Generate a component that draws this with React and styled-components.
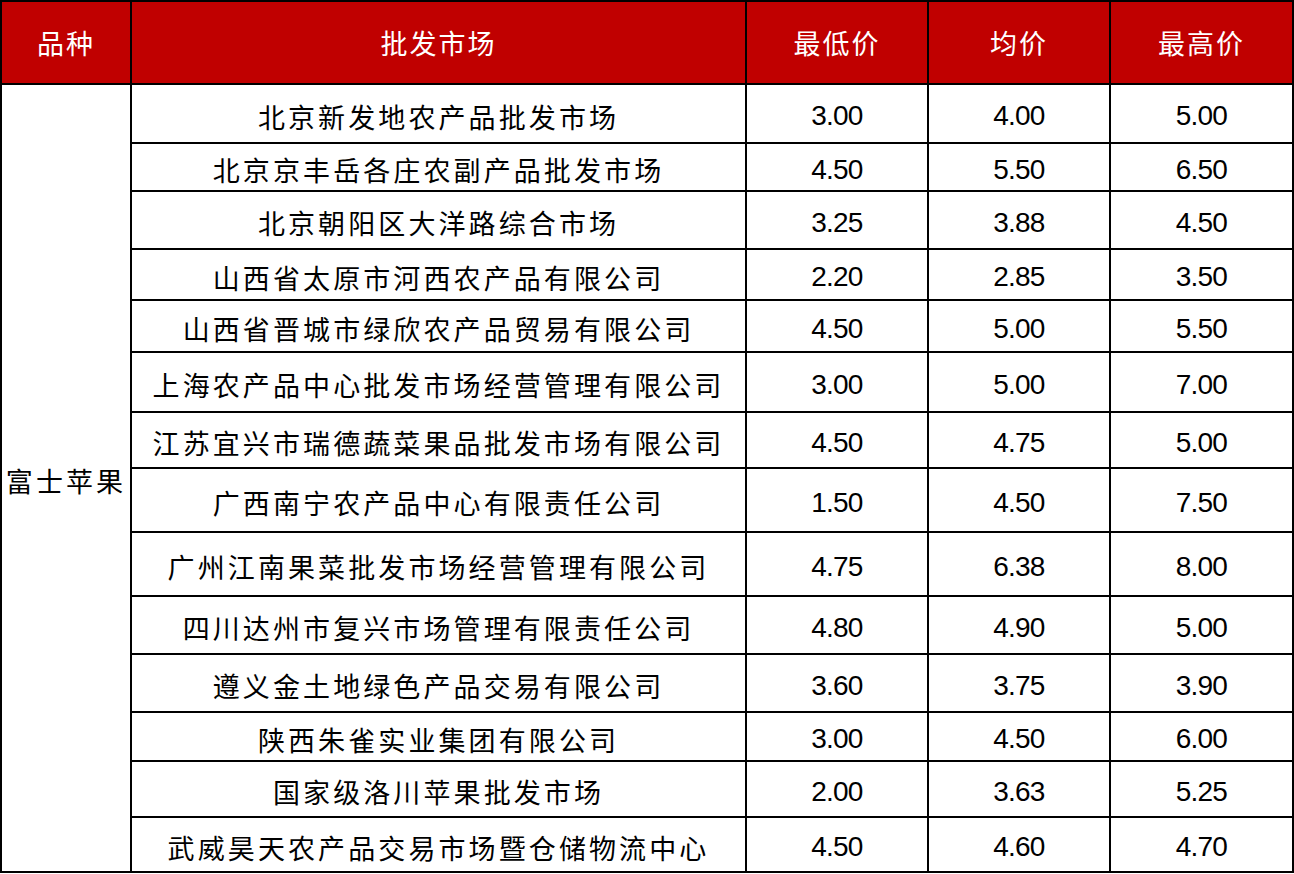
import React from 'react';
import styled, { createGlobalStyle } from 'styled-components';

const GlobalStyle = createGlobalStyle`
  html, body {
    margin: 0;
    padding: 0;
    background: #ffffff;
  }
  body {
    font-family: "Noto Sans CJK SC", "Liberation Sans", sans-serif;
  }
`;

const Table = styled.table`
  width: 1292px;
  border-collapse: collapse;
  table-layout: fixed;
  border: 2px solid #000;
`;

const Th = styled.th`
  height: 81px;
  padding: 0;
  background: #c00000;
  color: #fff;
  font-weight: 400;
  font-size: 27px;
  letter-spacing: 2px;
  text-align: center;
  vertical-align: middle;
  border: 2px solid #000;
`;

const Td = styled.td`
  height: ${(p) => p.$h}px;
  padding: 5px 0 0;
  box-sizing: border-box;
  border: 2px solid #000;
  text-align: center;
  vertical-align: middle;
  color: #000;
  font-size: 27px;
  letter-spacing: 3.1px;
  white-space: nowrap;
`;

const Kind = styled(Td)`
  padding-top: 4px;
`;

const Num = styled(Td)`
  font-family: "Liberation Sans", Arial, sans-serif;
  font-size: 28px;
  letter-spacing: -0.8px;
`;

const rows = [
  { name: '北京新发地农产品批发市场', low: '3.00', avg: '4.00', high: '5.00', h: 59 },
  { name: '北京京丰岳各庄农副产品批发市场', low: '4.50', avg: '5.50', high: '6.50', h: 48 },
  { name: '北京朝阳区大洋路综合市场', low: '3.25', avg: '3.88', high: '4.50', h: 58 },
  { name: '山西省太原市河西农产品有限公司', low: '2.20', avg: '2.85', high: '3.50', h: 51 },
  { name: '山西省晋城市绿欣农产品贸易有限公司', low: '4.50', avg: '5.00', high: '5.50', h: 52 },
  { name: '上海农产品中心批发市场经营管理有限公司', low: '3.00', avg: '5.00', high: '7.00', h: 60 },
  { name: '江苏宜兴市瑞德蔬菜果品批发市场有限公司', low: '4.50', avg: '4.75', high: '5.00', h: 56 },
  { name: '广西南宁农产品中心有限责任公司', low: '1.50', avg: '4.50', high: '7.50', h: 64 },
  { name: '广州江南果菜批发市场经营管理有限公司', low: '4.75', avg: '6.38', high: '8.00', h: 64 },
  { name: '四川达州市复兴市场管理有限责任公司', low: '4.80', avg: '4.90', high: '5.00', h: 58 },
  { name: '遵义金土地绿色产品交易有限公司', low: '3.60', avg: '3.75', high: '3.90', h: 58 },
  { name: '陕西朱雀实业集团有限公司', low: '3.00', avg: '4.50', high: '6.00', h: 49 },
  { name: '国家级洛川苹果批发市场', low: '2.00', avg: '3.63', high: '5.25', h: 56 },
  { name: '武威昊天农产品交易市场暨仓储物流中心', low: '4.50', avg: '4.60', high: '4.70', h: 55 },
];

const App = () => {
  return (
    <>
      <GlobalStyle />
      <Table>
        <colgroup>
          <col style={{ width: 130 }} />
          <col style={{ width: 615 }} />
          <col style={{ width: 182 }} />
          <col style={{ width: 182 }} />
          <col style={{ width: 183 }} />
        </colgroup>
        <thead>
          <tr>
            <Th>品种</Th>
            <Th>批发市场</Th>
            <Th>最低价</Th>
            <Th>均价</Th>
            <Th>最高价</Th>
          </tr>
        </thead>
        <tbody>
          {rows.map((r, i) => (
            <tr key={r.name}>
              {i === 0 && (
                <Kind rowSpan={rows.length} $h={r.h}>
                  富士苹果
                </Kind>
              )}
              <Td $h={r.h}>{r.name}</Td>
              <Num $h={r.h}>{r.low}</Num>
              <Num $h={r.h}>{r.avg}</Num>
              <Num $h={r.h}>{r.high}</Num>
            </tr>
          ))}
        </tbody>
      </Table>
    </>
  );
};

export default App;
